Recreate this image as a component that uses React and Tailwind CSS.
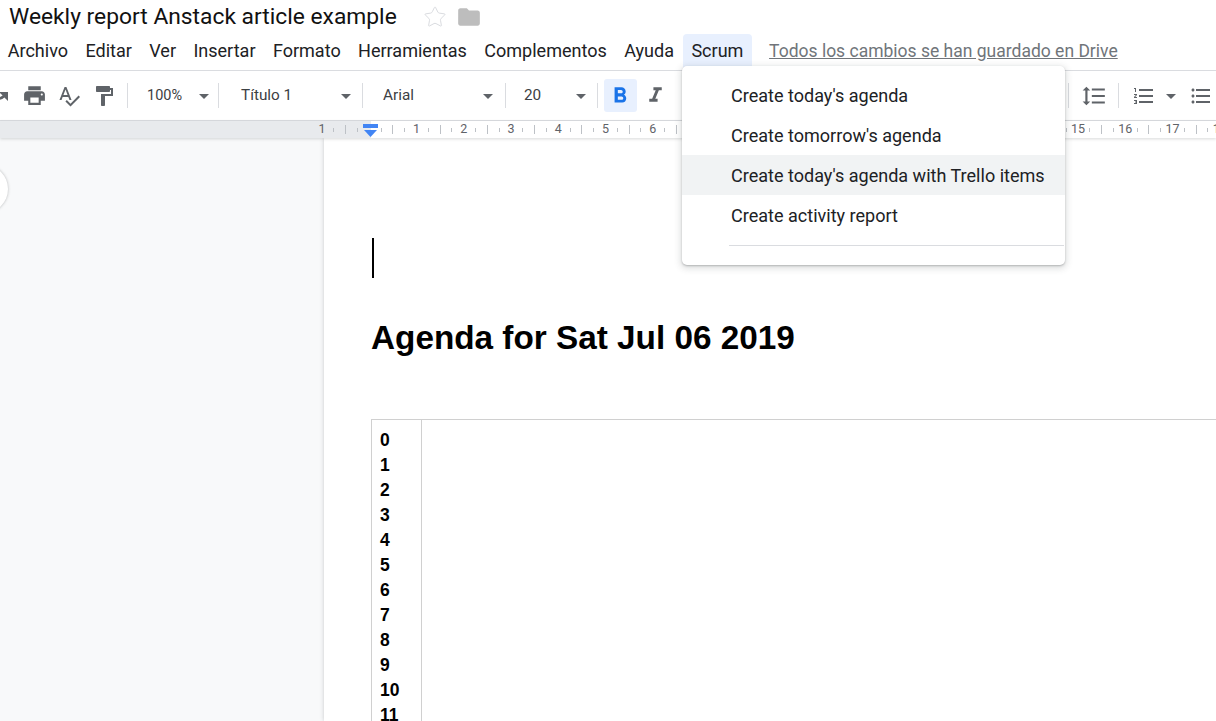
import { MdPrint, MdSpellcheck, MdFormatPaint, MdFormatBold, MdFormatItalic, MdFormatLineSpacing, MdFormatListNumbered, MdFormatListBulleted, MdRedo, MdFolder, MdArrowDropDown } from 'react-icons/md';
import { Star } from 'lucide-react';

const MENUS = ['Archivo', 'Editar', 'Ver', 'Insertar', 'Formato', 'Herramientas', 'Complementos', 'Ayuda'];
const ITEMS = ["Create today's agenda", "Create tomorrow's agenda", "Create today's agenda with Trello items", 'Create activity report'];
// numbers 7-14 sit behind the open menu, so they stay blank
const RULER = ['1', '', '1', '2', '3', '4', '5', '6', '', '', '', '', '', '', '', '', '15', '16', '17', '18'];
const ROWS = ['0', '1', '2', '3', '4', '5', '6', '7', '8', '9', '10', '11'];

function Sep() {
  return <div className="w-px h-[25px] bg-[#dadce0] shrink-0" />;
}

function Caret({ className = '' }) {
  return <MdArrowDropDown className={`text-[#5f6368] shrink-0 ${className}`} size={24} />;
}

function Select({ label, width, padClass = 'pr-[5px]', labelClass = 'text-[15.3px]' }) {
  return (
    <div className={`flex items-center justify-between shrink-0 text-[#3c4043] ${padClass}`} style={{ width }}>
      <span className={labelClass}>{label}</span>
      <Caret />
    </div>
  );
}

export default function App() {
  return (
    <div className="relative w-[1216px] h-[721px] overflow-hidden bg-white flex flex-col font-['Roboto',sans-serif]">

      {/* title */}
      <div className="h-[34px] shrink-0 flex items-center pl-[9px]">
        <span className="text-[22.8px] leading-none text-[#111]">Weekly report Anstack article example</span>
        <Star className="ml-[26px] text-[#dadce0]" size={24} strokeWidth={1} />
        <MdFolder className="ml-[9px] text-[#bdbdbd]" size={26} />
      </div>

      {/* menu bar */}
      <div className="h-[36px] shrink-0 flex items-stretch -ml-px text-[18.05px] text-[#202124]">
        {MENUS.map(m => (
          <div key={m} className="px-[8.7px] pb-[3px] flex items-center">{m}</div>
        ))}
        <div className="px-[8.7px] pb-[3px] flex items-center bg-[#e8f0fe] rounded-t-[4px]">Scrum</div>
        <span className="ml-[17px] pb-[2px] self-center text-[17.5px] text-[#70757a] underline">Todos los cambios se han guardado en Drive</span>
      </div>

      {/* toolbar */}
      <div className="h-[51px] shrink-0 border-y border-[#dadce0] flex items-center text-[#5f6368] overflow-hidden">
        <MdRedo size={24} className="-ml-[14px] shrink-0 -scale-x-100 rotate-180" />
        <MdPrint size={25} className="ml-[12px] shrink-0" />
        <MdSpellcheck size={24} className="ml-[10px] shrink-0" />
        <MdFormatPaint size={24} className="ml-[11px] shrink-0" />
        <div className="ml-[11px]"><Sep /></div>
        <div className="pl-[19px]"><Select label="100%" width={71} padClass="pr-[2px]" labelClass="text-[14.5px]" /></div>
        <Sep />
        <div className="pl-[22px]"><Select label="Título 1" width={122} /></div>
        <div className="ml-[-1px]"><Sep /></div>
        <div className="pl-[20px]"><Select label="Arial" width={122} /></div>
        <Sep />
        <div className="pl-[18px]"><Select label="20" width={73} padClass="pr-[4px]" /></div>
        <Sep />
        <div className="ml-[6px] w-[33px] h-[33px] rounded-[3px] bg-[#e8f0fe] flex items-center justify-center shrink-0">
          <MdFormatBold size={26} className="text-[#1a73e8] -ml-[2px]" />
        </div>
        <MdFormatItalic size={25} className="ml-[6px] shrink-0" />
        <div className="ml-[400px]"><Sep /></div>
        <MdFormatLineSpacing size={26} className="ml-[12px] shrink-0" />
        <div className="ml-[11px]"><Sep /></div>
        <MdFormatListNumbered size={24} className="ml-[13px] shrink-0" />
        <Caret className="ml-[3px]" />
        <MdFormatListBulleted size={24} className="ml-[6px] shrink-0" />
      </div>

      {/* ruler */}
      <div className="h-[17px] shrink-0 flex items-center pl-[292.5px] overflow-hidden bg-[linear-gradient(to_right,#e8eaed_371px,#fff_371px)] shadow-[0_1px_3px_rgba(60,64,67,0.2)] relative z-10">
        {RULER.map((n, i) => (
          <div key={i} className="w-[47.25px] shrink-0 flex items-center text-[12.5px] text-[#5f6368]">
            <span className="w-[11.8px] flex justify-center">{i > 0 && <i className="block w-px h-[9px] bg-[#bdc1c6]" />}</span>
            <span className="w-[11.8px] flex justify-center">{i > 0 && <i className="block w-px h-[4px] bg-[#bdc1c6]" />}</span>
            <span className="w-[11.8px] flex justify-center leading-none">{n}</span>
            <span className="w-[11.8px] flex justify-center"><i className="block w-px h-[4px] bg-[#bdc1c6]" /></span>
          </div>
        ))}
        {/* indent marker */}
        <svg className="absolute left-[363px] top-[3px]" width="15" height="14" viewBox="0 0 15 14">
          <rect width="15" height="4" fill="#4285f4" />
          <path d="M1 6h13l-6.500 7z" fill="#4285f4" />
        </svg>
      </div>

      {/* document area */}
      <div className="flex-1 min-h-0 flex bg-[#f8f9fa] overflow-hidden relative">
        <div className="absolute -left-[40px] top-[27px] w-[48px] h-[48px] rounded-full bg-white shadow-[0_0_3px_rgba(60,64,67,0.35)]" />
        <div className="ml-[324px] flex-1 bg-white shadow-[0_0_4px_rgba(60,64,67,0.25)] pl-[47px] font-['Liberation_Sans',sans-serif] text-black">
          <div className="h-[40px] w-[2px] bg-black mt-[100px] ml-[1px]" />
          <h1 className="mt-[37px] text-[33.3px] leading-[45px] font-bold">Agenda for Sat Jul 06 2019</h1>
          <div className="mt-[59px] border-l border-t border-[#d0d0d0] flex w-[1000px] h-[400px]">
            <div className="w-[50px] border-r border-[#d0d0d0] pl-[8px] pt-[8px] text-[17.5px] leading-[25px] font-bold">
              {ROWS.map(r => <div key={r}>{r}</div>)}
            </div>
          </div>
        </div>
      </div>

      {/* Scrum dropdown */}
      <div className="absolute left-[682px] top-[66px] w-[383px] h-[199px] bg-white rounded-[5px] shadow-[0_2px_6px_2px_rgba(60,64,67,0.15),0_1px_2px_rgba(60,64,67,0.3)] pt-[9px] z-20 text-[18.05px] text-[#202124]">
        {ITEMS.map((t, i) => (
          <div key={t} className={`h-[40px] pl-[49px] pt-[2px] flex items-center ${i === 2 ? 'bg-[#f1f3f4]' : ''}`}>{t}</div>
        ))}
        <div className="mt-[10px] ml-[47px] mr-px h-px bg-[#dadce0]" />
      </div>
    </div>
  );
}
